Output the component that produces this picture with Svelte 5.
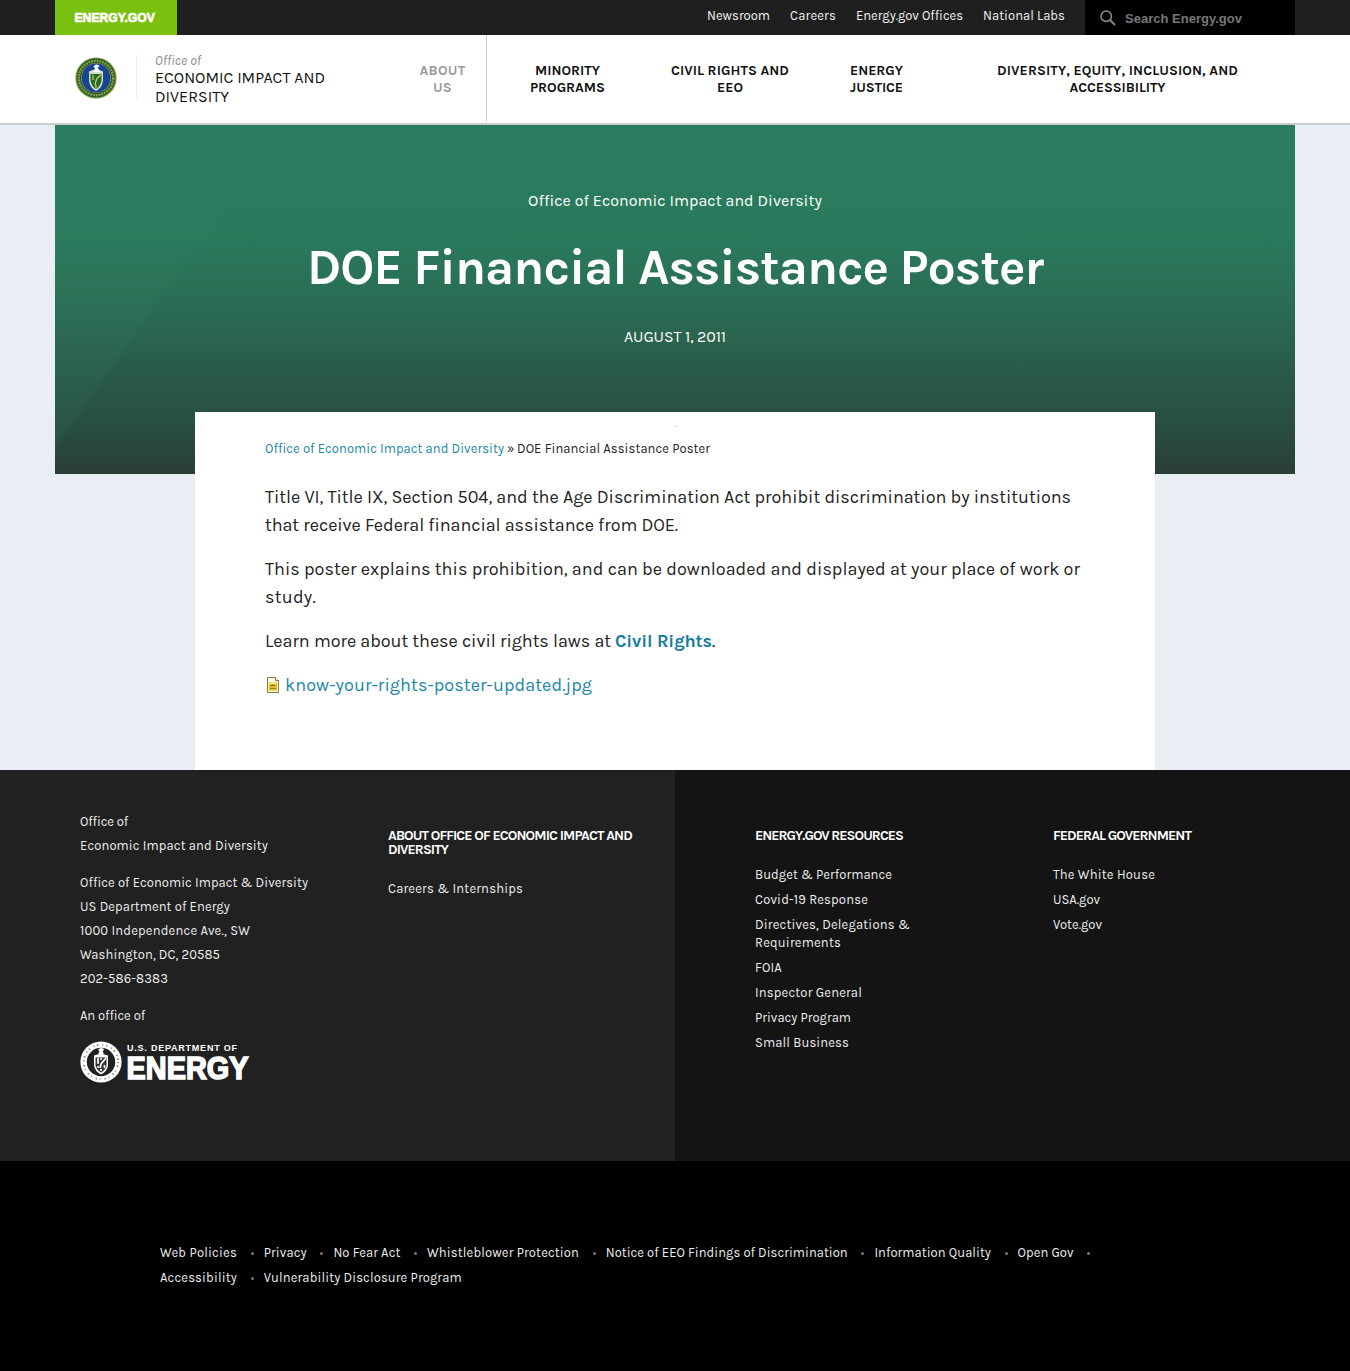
<script>
  // Spreads letter spacing so that a line of text takes the given width.
  function fit(node, width) {
    if (!width) return;
    const natural = node.getBoundingClientRect().width;
    const count = node.textContent.length;
    node.style.letterSpacing = `${(width - natural) / count}px`;
  }

  const topLinks = [
    ['Newsroom', 63], ['Careers', 46], ['Energy.gov Offices', 107], ['National Labs', 82]
  ];

  const sections = [
    { lines: [['ABOUT', 46], ['US', 19]], active: true },
    { lines: [['MINORITY', 65], ['PROGRAMS', 75]] },
    { lines: [['CIVIL RIGHTS AND', 118], ['EEO', 26]] },
    { lines: [['ENERGY', 53], ['JUSTICE', 53]] },
    { lines: [['DIVERSITY, EQUITY, INCLUSION, AND', 241], ['ACCESSIBILITY', 96]] }
  ];

  const address = [
    [['Office of', 48], ['Economic Impact and Diversity', 188]],
    [
      ['Office of Economic Impact & Diversity', 228],
      ['US Department of Energy', 150],
      ['1000 Independence Ave., SW', 170],
      ['Washington, DC, 20585', 140],
      ['202-586-8383', 88]
    ],
    [['An office of', 65]]
  ];

  const resources = [
    [['Budget & Performance', 137]],
    [['Covid-19 Response', 113]],
    [['Directives, Delegations &', 155], ['Requirements', 86]],
    [['FOIA', 27]],
    [['Inspector General', 107]],
    [['Privacy Program', 96]],
    [['Small Business', 94]]
  ];

  const federal = [[['The White House', 102]], [['USA.gov', 47]], [['Vote.gov', 49]]];

  const policies = [
    [
      ['Web Policies', 77], ['Privacy', 43], ['No Fear Act', 67], ['Whistleblower Protection', 152],
      ['Notice of EEO Findings of Discrimination', 242], ['Information Quality', 116.500], ['Open Gov', 56]
    ],
    [['Accessibility', 77], ['Vulnerability Disclosure Program', 198]]
  ];
</script>

{#snippet rows(lines)}
  {#each lines as [text, width]}
    <span class="row"><span class="fit" use:fit={width}>{text}</span></span>
  {/each}
{/snippet}

{#snippet linkList(items)}
  <ul class="links">
    {#each items as lines}
      <li><a href="#top">{@render rows(lines)}</a></li>
    {/each}
  </ul>
{/snippet}

<div class="page" id="top">
  <div class="topbar">
    <div class="wrap topbar-inner">
      <a class="brand" href="#top" aria-label="Energy.gov">
        <svg width="122" height="35">
          <text x="20" y="22.500" textLength="134" lengthAdjust="spacingAndGlyphs" class="brand-text" transform="translate(7.500 0) scale(.6 1)">ENERGY.GOV</text>
        </svg>
      </a>
      <nav class="top-links">
        {#each topLinks as [text, width]}
          <a href="#top"><span class="fit" use:fit={width}>{text}</span></a>
        {/each}
      </nav>
      <div class="search">
        <svg width="16" height="16" viewBox="0 0 16 16" fill="none" stroke="#8c8c8c" stroke-width="1.500">
          <circle cx="6.200" cy="6.200" r="5.200" />
          <path d="M10 10l5 5" stroke-width="1.800" />
        </svg>
        <span class="fit" use:fit={117}>Search Energy.gov</span>
      </div>
    </div>
  </div>

  <header class="masthead">
    <div class="wrap masthead-inner">
      <svg class="seal" width="42" height="42" viewBox="0 0 42 42">
        <circle cx="21" cy="21" r="20.600" fill="#82962c" />
        <circle cx="21" cy="21" r="19.400" fill="#1d5a36" />
        <circle cx="21" cy="21" r="17.200" fill="none" stroke="#8f9c42" stroke-width="2.400" stroke-dasharray="1.900 .9" />
        <circle cx="21" cy="21" r="15" fill="#b5a53c" />
        <circle cx="21" cy="21" r="14.400" fill="#174596" />
        <path d="M14 14.500q7-4 14 0v9.500q-1 7-7 10q-6-3-7-10z" fill="#d5dfc0" />
        <path d="M15.500 17h11v7q-1 5-5.500 8q-4.500-3-5.500-8z" fill="#216a32" />
        <path d="M25.500 18l-4 4-1.500 6M18 18v5M21 28v3" fill="none" stroke="#e2d645" stroke-width="1.200" />
        <path d="M18.500 9.500q2-3 5-1.500l1 2-2 0 2.500 5h-7l2-3.500z" fill="#fff" />
      </svg>
      <div class="office">
        <span class="office-label"><span class="fit" use:fit={46}>Office of</span></span>
        {@render rows([['ECONOMIC IMPACT AND', 170], ['DIVERSITY', 74]])}
      </div>
      <nav class="sections">
        {#each sections as section}
          <a href="#top" class:active={section.active}>{@render rows(section.lines)}</a>
        {/each}
      </nav>
    </div>
  </header>

  <main class="body">
    <section class="wrap hero">
      <p class="hero-office"><span class="fit" use:fit={294}>Office of Economic Impact and Diversity</span></p>
      <h1><span class="fit" use:fit={736}>DOE Financial Assistance Poster</span></h1>
      <p class="hero-date"><span class="fit" use:fit={102}>AUGUST 1, 2011</span></p>
    </section>

    <article class="card">
      <div class="speck"></div>
      <div class="crumbs">
        <a href="#top"><span class="fit" use:fit={239}>Office of Economic Impact and Diversity</span></a>
        <span class="fit" use:fit={7}>»</span>
        <span class="fit" use:fit={193}>DOE Financial Assistance Poster</span>
      </div>
      <p>
        {@render rows([
          ['Title VI, Title IX, Section 504, and the Age Discrimination Act prohibit discrimination by institutions', 806],
          ['that receive Federal financial assistance from DOE.', 413]
        ])}
      </p>
      <p>
        {@render rows([
          ['This poster explains this prohibition, and can be downloaded and displayed at your place of work or', 815],
          ['study.', 51]
        ])}
      </p>
      <p class="learn">
        <span class="fit" use:fit={346}>Learn more about these civil rights laws at</span>
        <a class="strong" href="#top"><span class="fit" use:fit={97}>Civil Rights</span></a><span>.</span>
      </p>
      <p class="file">
        <svg width="16" height="16" viewBox="0 0 16 16">
          <path d="M2.500.500h8l3 3v12h-11z" fill="#fffbe2" stroke="#8b7441" />
          <path d="M10.500.500v3h3" fill="#fff" stroke="#8b7441" />
          <path d="M4 5.500h8v8h-8z" fill="#e7bd18" />
          <path d="M5 11.500h6" fill="none" stroke="#a58213" />
          <path d="M5 9q3-3 6 0z" fill="#8b6d10" />
          <path d="M5 6.500h6" stroke="#fff2a0" />
        </svg>
        <a href="#top"><span class="fit" use:fit={307}>know-your-rights-poster-updated.jpg</span></a>
      </p>
    </article>
  </main>

  <footer>
    <div class="footer-main">
      <div class="footer-half left">
        <div class="address">
          {#each address as group}
            <p>{@render rows(group)}</p>
          {/each}
          <svg class="doe" width="171" height="42" viewBox="0 0 171 42">
            <circle cx="21" cy="21" r="20.600" fill="#fff" />
            <circle cx="21" cy="21" r="17.200" fill="none" stroke="#888" stroke-width="1.800" stroke-dasharray="1 2.600 1.500 4" />
            <circle cx="21" cy="21" r="14.200" fill="#212121" />
            <path d="M14 14.500q7-3 14 0v10q-1 6-7 9q-6-3-7-9z" fill="#fff" />
            <path d="M15.500 16.500h11v8q-1 4.500-5.500 7q-4.500-2.500-5.500-7z" fill="#333" />
            <path d="M26 17l-5 6-1 4M18 17v5h-1M21 28v2M24.500 24v3M20 18h2M17 26h2" fill="none" stroke="#fff" stroke-width="1.700" />
            <path d="M18 9q2-3 5.500-1.500l.5 2-1.500 0 1.500 4h-6l1.500-3.500z" fill="#fff" />
            <text class="doe-small" x="47" y="10" textLength="110">U.S. DEPARTMENT OF</text>
            <text class="doe-big" x="46.500" y="37.500" textLength="122" lengthAdjust="spacingAndGlyphs">ENERGY</text>
          </svg>
        </div>
        <div class="about">
          <h2>{@render rows([['ABOUT OFFICE OF ECONOMIC IMPACT AND', 244], ['DIVERSITY', 60]])}</h2>
          {@render linkList([[['Careers & Internships', 135]]])}
        </div>
      </div>
      <div class="footer-half right">
        <div class="resources">
          <h2>{@render rows([['ENERGY.GOV RESOURCES', 148]])}</h2>
          {@render linkList(resources)}
        </div>
        <div>
          <h2>{@render rows([['FEDERAL GOVERNMENT', 138]])}</h2>
          {@render linkList(federal)}
        </div>
      </div>
    </div>
    <div class="legal">
      {#each policies as line, i}
        <ul>
          {#each line as [text, width], j}
            <li class:dotted={i === 0 || j < line.length - 1}>
              <a href="#top"><span class="fit" use:fit={width}>{text}</span></a>
            </li>
          {/each}
        </ul>
      {/each}
    </div>
  </footer>
</div>

<style>
  :global(body) {
    background: #000;
  }
  .page {
    width: 1350px;
    height: 1371px;
    overflow: hidden;
    font: 13px/24px Karla, Roboto, 'Liberation Sans', sans-serif;
    color: #222;
  }
  a {
    color: inherit;
    text-decoration: none;
  }
  p, h1, h2, ul {
    margin: 0;
    padding: 0;
    list-style: none;
  }
  .row {
    display: block;
    white-space: nowrap;
  }
  .fit {
    display: inline-block;
    white-space: nowrap;
  }
  .wrap {
    width: 1240px;
    margin: 0 auto;
  }

  .topbar {
    background: #1f1f1f;
    height: 35px;
  }
  .topbar-inner {
    display: flex;
    height: 35px;
  }
  .brand {
    width: 122px;
    background: #7ac10f;
  }
  .brand svg {
    display: block;
  }
  .brand-text {
    fill: #fff;
    stroke: #fff;
    stroke-width: 0.7px;
    font: bold 12.500px 'Liberation Sans', Arial, sans-serif;
  }
  .top-links {
    display: flex;
    gap: 20px;
    margin-left: auto;
    padding-right: 20px;
    color: #f2f2f2;
    line-height: 32px;
  }
  .search {
    display: flex;
    gap: 9px;
    width: 195px;
    padding-left: 15px;
    background: #000;
    color: #777;
    font: bold 13px/37px 'Liberation Sans', Arial, sans-serif;
  }
  .search svg {
    margin-top: 10px;
  }

  .masthead {
    height: 88px;
    border-bottom: 2px solid #c9cccc;
    background: #fff;
  }
  .masthead-inner {
    display: flex;
    height: 88px;
  }
  .seal {
    margin: 22px 19.500px 0 19.500px;
    flex: none;
  }
  .office {
    width: 244px;
    height: 44px;
    margin-top: 20px;
    padding-left: 18px;
    border-left: 1px solid #eee;
    font-size: 16px;
    line-height: 19px;
    color: #111;
  }
  .office-label {
    display: block;
    height: 13px;
    line-height: 12px;
    font-size: 13px;
    font-style: italic;
    color: #888;
  }
  .sections {
    display: grid;
    grid-template-columns: 88px 161px 164px 129px 353px;
    height: 87px;
    color: #111;
    font-size: 14px;
    font-weight: bold;
    line-height: 17px;
    text-align: center;
  }
  .sections a {
    padding-top: 27px;
  }
  .sections .active {
    border-right: 1px solid #ccc;
    color: #999;
  }

  .body {
    height: 645px;
    background: #e9eef4;
  }
  .hero {
    height: 349px;
    color: #fff;
    text-align: center;
    background:
      linear-gradient(125deg, rgba(55, 135, 105, 0.12) 0 15%, transparent 15.500%),
      linear-gradient(#2a7c5e 0, #2a7b5d 30%, #2a7156 45%, #2a654f 60%, #295748 74%, #285043 84%, #2a3e37 100%);
  }
  .hero-office {
    padding-top: 64px;
    font-size: 16px;
  }
  h1 {
    padding-top: 24px;
    font-size: 50px;
    line-height: 62px;
  }
  .hero-date {
    padding-top: 26px;
    font-size: 16px;
  }

  .card {
    box-sizing: border-box;
    position: relative;
    width: 960px;
    height: 358px;
    margin: -62px auto 0;
    padding: 25px 70px 0;
    background: #fff;
    font-size: 18px;
    line-height: 28px;
  }
  .card a {
    color: #1b87a8;
  }
  .speck {
    position: absolute;
    left: 480px;
    top: 13px;
    width: 2px;
    height: 2px;
    background: #e4eaef;
  }
  .crumbs {
    display: flex;
    gap: 3px;
    font-size: 13px;
    line-height: 24px;
    margin-bottom: 22px;
  }
  .card p {
    margin-bottom: 16px;
  }
  .learn, .file {
    display: flex;
  }
  .card .strong {
    margin-left: 4px;
    color: #187ba0;
    font-weight: bold;
  }
  .file svg {
    margin: 6px 4px 0 0;
  }

  .footer-main {
    display: grid;
    grid-template-columns: 1fr 1fr;
    height: 391px;
    color: #eee;
  }
  .footer-half {
    display: flex;
  }
  .left {
    padding-left: 80px;
    background: #212121;
  }
  .right {
    padding-left: 80px;
    background: #141414;
  }
  .address {
    width: 308px;
    padding-top: 40px;
  }
  .address p {
    margin-bottom: 13px;
  }
  .doe {
    display: block;
    overflow: visible;
    fill: #fff;
    font-family: 'Liberation Sans', Arial, sans-serif;
    font-weight: bold;
  }
  .doe-small {
    font-size: 9px;
  }
  .doe-big {
    font-size: 32px;
    stroke: #fff;
    stroke-width: 1.600px;
  }
  h2 {
    padding-top: 59px;
    margin-bottom: 23px;
    color: #fff;
    font-size: 14px;
    line-height: 14px;
  }
  .resources {
    width: 298px;
  }
  .links li {
    margin-bottom: 7px;
    line-height: 18px;
  }
  .legal {
    height: 131px;
    padding: 79px 160px 0;
    background: #000;
    color: #eee;
    line-height: 25px;
  }
  .legal ul {
    display: flex;
  }
  .legal .dotted::after {
    content: '';
    display: inline-block;
    width: 3px;
    height: 3px;
    margin: 0 10px 2px 13.700px;
    border-radius: 50%;
    background: #777;
  }
</style>
